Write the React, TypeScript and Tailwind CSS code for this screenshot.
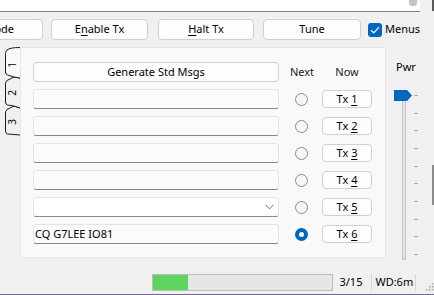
import React from "react";

const font = { fontFamily: '"Noto Sans", "Open Sans", sans-serif' };

function Btn({ w, children, className = "" }: { w: string; children: React.ReactNode; className?: string }) {
  return (
    <div
      className={`${w} flex h-[21px] shrink-0 items-center justify-center rounded-[4px] border border-[#d0d0d0] bg-[#fdfdfd] text-[11px] text-black ${className}`}
    >
      {children}
    </div>
  );
}

function Radio({ on }: { on?: boolean }) {
  if (on) {
    return (
      <div className="flex h-[13px] w-[13px] items-center justify-center rounded-full bg-[#0067c0]">
        <div className="h-[5px] w-[5px] rounded-full bg-white" />
      </div>
    );
  }
  return <div className="h-[13px] w-[13px] rounded-full border border-[#8a8a8a] bg-[#f6f6f6]" />;
}

function TxBtn({ n }: { n: number }) {
  return (
    <div className="flex h-[18px] w-[50px] items-center justify-center rounded-[4px] border border-[#d0d0d0] bg-[#fdfdfd] text-[11px] text-black">
      Tx&nbsp;<span className="underline underline-offset-2">{n}</span>
    </div>
  );
}

function Field({ text, combo }: { text?: string; combo?: boolean }) {
  return (
    <div
      className={`flex h-[20px] w-[246px] items-center rounded-[3px] border border-[#e4e4e4] border-b-[#878787] px-[1px] text-[11px] text-black ${
        combo ? "bg-white" : "bg-[#fbfbfb]"
      }`}
    >
      <span className="flex-1">{text}</span>
      {combo ? (
        <svg width="9" height="6" viewBox="0 0 9 6" className="mr-[3px]">
          <path d="M0.5 0.8 L4.5 4.8 L8.5 0.8" stroke="#6a6a6a" strokeWidth="1" fill="none" />
        </svg>
      ) : null}
    </div>
  );
}

function Tabs() {
  return (
    <svg width="20" height="92" viewBox="0 0 20 92" className="shrink-0">
      <path d="M20 61 L14 59 L7 62.5 Q5.5 64 5.5 66 L5.5 84 Q5.5 86.5 7.5 87 L20 88" fill="#f0f0f0" stroke="#1a1a1a" strokeWidth="1" />
      <path d="M20 31 L14 30 L7 33.5 Q5.5 35 5.5 37 L5.5 55 Q5.5 57.5 7.5 58 L14 59 L20 61" fill="#f0f0f0" stroke="#1a1a1a" strokeWidth="1" />
      <path d="M20 0.5 Q10 0.5 7 3 Q5.5 4.5 5.5 6.5 L5.5 25 Q5.5 27.5 7.5 28 L14 30 L20 31" fill="#f9f9f9" stroke="#1a1a1a" strokeWidth="1" />
      <text x="0" y="0" transform="translate(15.5 18) rotate(-90)" fontSize="10" textAnchor="middle" fill="#000" style={font}>1</text>
      <text x="0" y="0" transform="translate(15.5 46) rotate(-90)" fontSize="10" textAnchor="middle" fill="#000" style={font}>2</text>
      <text x="0" y="0" transform="translate(15.5 75) rotate(-90)" fontSize="10" textAnchor="middle" fill="#000" style={font}>3</text>
    </svg>
  );
}

export default function App() {
  const rows = [
    { n: 1 },
    { n: 2 },
    { n: 3 },
    { n: 4 },
    { n: 5, combo: true },
    { n: 6, text: "CQ G7LEE IO81", on: true },
  ];

  return (
    <div className="relative flex h-[295px] w-[434px] flex-col overflow-hidden bg-[#f0f0f0]" style={font}>
      {/* top strip */}
      <div className="flex h-[12px] shrink-0">
        <div className="relative flex-1 border-b border-[#808080] bg-white">
          <div className="absolute right-[3px] top-0 h-[6px] w-[8px] rounded-b-[3px] bg-[#c4c4c4]" />
        </div>
        <div className="flex w-[14px] justify-end">
          <div className="h-[11px] w-[2px] bg-[#5a5a5a]" />
        </div>
      </div>

      {/* button row */}
      <div className="mt-[7px] flex h-[21px] shrink-0 items-center">
        <Btn w="w-[97px]" className="ml-[-54px]">Decode</Btn>
        <Btn w="w-[97px]" className="ml-[8px]">
          E<span className="underline underline-offset-2">n</span>able Tx
        </Btn>
        <Btn w="w-[96px]" className="ml-[10px]">
          <span className="underline underline-offset-2">H</span>alt Tx
        </Btn>
        <Btn w="w-[98px]" className="ml-[9px]">Tune</Btn>
        <div className="ml-[7px] flex h-[14px] w-[14px] items-center justify-center rounded-[3px] bg-[#0067c0]">
          <svg width="10" height="8" viewBox="0 0 10 8">
            <path d="M1 4.2 L3.8 6.8 L9 1.2" stroke="white" strokeWidth="1.2" fill="none" />
          </svg>
        </div>
        <span className="ml-[3px] text-[11px] text-black">Menus</span>
      </div>

      {/* main area */}
      <div className="mt-[7px] flex h-[211px] shrink-0">
        <Tabs />
        <div className="w-[366px] border border-[#e6e6e6] bg-[#f9f9f9] pl-[12px] pt-[14px]">
          <div className="flex flex-col gap-[7px]">
            <div className="grid h-[20px] grid-cols-[246px_43px_50px] items-center">
              <div className="flex h-[20px] items-center justify-center rounded-[4px] border border-[#d0d0d0] bg-[#fdfdfd] text-[11px] text-black">
                Generate Std Msgs
              </div>
              <div className="pl-[3px] text-center text-[11px] text-[#1b1b2b]">Next</div>
              <div className="text-center text-[11px] text-[#1b1b2b]">Now</div>
            </div>
            {rows.map((r) => (
              <div key={r.n} className="grid h-[20px] grid-cols-[246px_43px_50px] items-center">
                <Field text={r.text} combo={r.combo} />
                <div className="flex pl-[16px]">
                  <Radio on={r.on} />
                </div>
                <TxBtn n={r.n} />
              </div>
            ))}
          </div>
        </div>

        {/* power slider */}
        <div className="relative w-[48px]">
          <div className="mt-[14px] pl-[10px] text-[11px] leading-[12px] text-black">Pwr</div>
          <div className="relative ml-[16px] mt-[22px] h-[165px] w-[4px] border border-[#c6c6c6] bg-[#e2e2e2]">
            <svg width="18" height="11" viewBox="0 0 18 11" className="absolute left-[-9px] top-[-6px]">
              <path d="M0 0 H13 L18 5.5 L13 11 H0 Z" fill="#0067c0" />
            </svg>
            <div className="absolute left-[11px] top-[-1px] flex h-[160px] flex-col justify-between">
              {Array.from({ length: 10 }).map((_, i) => (
                <div key={i} className="h-px w-[4px] bg-[#a8a8a8]" />
              ))}
            </div>
          </div>
          <div className="absolute right-0 top-[118px] h-[40px] w-[2px] bg-[#8c8c8c]" />
        </div>
      </div>

      {/* status bar */}
      <div className="mt-[16px] flex h-[17px] shrink-0 items-center">
        <div className="ml-[152px] flex h-[17px] w-[185px] border border-[#bcbcbc] bg-[#e6e6e6]">
          <div className="h-full w-[35px] bg-[#5ed45e]" />
        </div>
        <span className="ml-[6px] text-[11px] text-black">3/15</span>
        <div className="ml-[9px] h-[17px] w-px bg-[#d6d6d6]" />
        <span className="ml-[3px] text-[11px] text-black">WD:6m</span>
        <div className="ml-[2px] h-[17px] w-px bg-[#d6d6d6]" />
        <svg width="9" height="9" viewBox="0 0 9 9" className="ml-[9px] mt-[8px]">
          <rect x="7" y="1" width="1.5" height="1.5" fill="#a0a0a0" />
          <rect x="4" y="4" width="1.5" height="1.5" fill="#a0a0a0" />
          <rect x="7" y="4" width="1.5" height="1.5" fill="#a0a0a0" />
          <rect x="1" y="7" width="1.5" height="1.5" fill="#a0a0a0" />
          <rect x="4" y="7" width="1.5" height="1.5" fill="#a0a0a0" />
          <rect x="7" y="7" width="1.5" height="1.5" fill="#a0a0a0" />
        </svg>
      </div>

      <div className="mt-auto h-px w-full bg-[#6e6e8c]" />
    </div>
  );
}
